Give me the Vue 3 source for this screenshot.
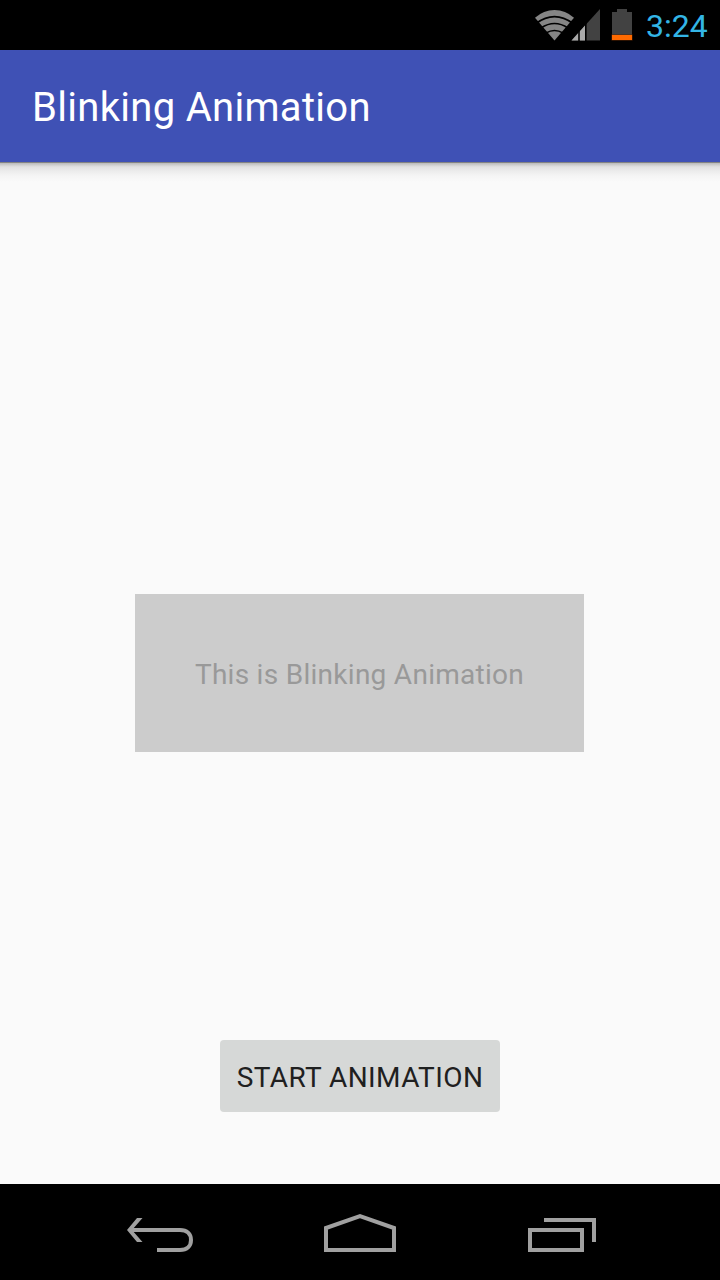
<script setup>
const title = 'Blinking Animation'
const message = 'This is Blinking Animation'
const action = 'START ANIMATION'
</script>

<template>
  <div class="screen">
    <header class="status">
      <svg class="indicators" width="112" height="50" viewBox="528 0 112 50">
        <path d="M554.5 40.5 L535 17.8 Q543.5 10 554.5 10 Q565.500 10 574 17.800 Z" fill="#858585" />
        <g fill="none" stroke="#000" stroke-width="1.6">
          <path d="M536 23.500 Q554.500 9.800 573 23.500" />
          <path d="M541 28 Q554.500 19 568 28" />
          <path d="M546 33 Q554.500 28 563 33" />
        </g>
        <path d="M600 9 V40.500 H571.500 Z" fill="#424242" />
        <path d="M571.500 40.500 L585 25.500 V40.500 Z" fill="#aaa" />
        <path d="M579 30 V41 M585.800 20 V41" stroke="#000" stroke-width="1.600" />
        <path d="M612 12 H617 V9 H627 V12 H632 V35 H612 Z" fill="#424242" />
        <rect x="611.500" y="34.500" width="21" height="6" fill="#5a2500" />
        <rect x="612" y="35" width="20" height="5" fill="#ff6a00" />
      </svg>
      <span class="clock">3:24</span>
    </header>
    <div class="appbar"><h1>{{ title }}</h1></div>
    <main>
      <div class="card"><span>{{ message }}</span></div>
      <button type="button"><span>{{ action }}</span></button>
    </main>
    <nav>
      <svg width="720" height="96" viewBox="0 1184 720 96" fill="none" stroke="#a0a0a0" stroke-width="4">
        <path d="M130 1230 H180 C187 1230 191 1234 191 1240 C191 1246 187 1250 180 1250 H157" />
        <path d="M137 1218 H142.500 L132 1230 L142.500 1242 H137 L127 1230 Z" fill="#a0a0a0" stroke="none" />
        <path d="M326 1250 V1228 L360 1216.200 L394 1228 V1250 Z" />
        <path d="M530 1230 H582 V1250 H530 Z M544 1220 H594 V1242" />
      </svg>
    </nav>
  </div>
</template>

<style>
body { margin: 0; background: #fafafa; }
</style>

<style scoped>
.screen {
  display: flex;
  flex-direction: column;
  width: 720px;
  height: 1280px;
  overflow: hidden;
  background: #fafafa;
  font-family: Roboto, "Noto Sans", sans-serif;
}
.status {
  display: flex;
  height: 50px;
  flex: none;
  box-sizing: border-box;
  padding-left: 528px;
  background: #000;
}
.indicators { flex: none; }
.clock {
  padding-left: 6px;
  color: #33b5e5;
  font-size: 32px;
  line-height: 52px;
  white-space: nowrap;
}
.appbar {
  flex: none;
  height: 112px;
  box-sizing: border-box;
  padding-left: 32px;
  background: #3f51b5;
}
h1 {
  margin: 0;
  color: #fff;
  font-size: 40px;
  font-weight: 400;
  letter-spacing: .3px;
  line-height: 116px;
  white-space: nowrap;
}
main {
  display: flex;
  flex: 1;
  flex-direction: column;
  align-items: center;
  background: linear-gradient(#808080 0, #858585 1px, #bababa 1px, #cfcfcf 3px, #e2e2e2 5px, #ececec 9px, #f5f5f5 14px, #fafafa 20px);
}
.card {
  display: flex;
  align-items: center;
  justify-content: center;
  box-sizing: border-box;
  width: 449px;
  height: 158px;
  margin: 432px 1px 0 0;
  padding-top: 3px;
  background: #ccc;
  color: #999;
  font-size: 28px;
  letter-spacing: .28px;
  line-height: 38px;
  white-space: nowrap;
}
button {
  width: 280px;
  height: 72px;
  margin: 288px 0 0;
  padding: 4px 0 0;
  border: 0;
  border-radius: 4px;
  background: #d6d8d7;
  color: #1f2020;
  font: 400 28px/38px Roboto, "Noto Sans", sans-serif;
  letter-spacing: .42px;
  white-space: nowrap;
}
nav { flex: none; height: 96px; background: #000; }
nav svg { display: block; }
</style>
